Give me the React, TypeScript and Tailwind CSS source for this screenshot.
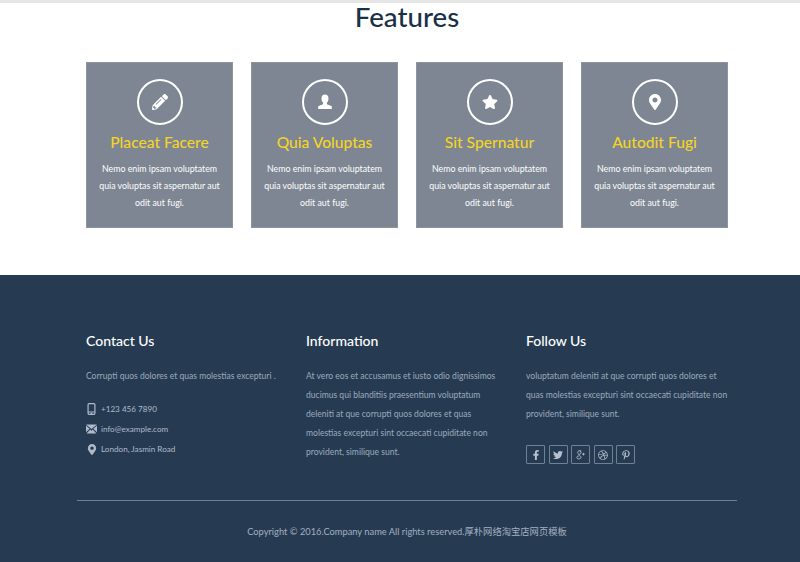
import { FaDribbble, FaFacebookF, FaMapMarkerAlt, FaPencilAlt, FaPinterestP, FaStar, FaTwitter } from 'react-icons/fa'

function UserGlyph() {
  return (
    <svg className="w-[16px] h-[16px]" viewBox="0 0 16 16" fill="currentColor">
      <path d="M8 0.5c2.2 0 3.5 1.6 3.5 3.9 0 1.7-.7 3.3-1.6 4.2v1.3c0 .5 3.6 1.3 4.9 2.4v2.7H1.2v-2.7c1.3-1.1 4.9-1.9 4.9-2.4V8.6C5.200 7.700 4.500 6.100 4.500 4.400 4.500 2.100 5.800.5 8 .5z" />
    </svg>
  )
}

function PhoneGlyph() {
  return (
    <svg className="w-[9px] h-[12px]" viewBox="0 0 10 14" fill="none" stroke="currentColor">
      <rect x="1" y="0.7" width="8" height="12.6" rx="1.2" strokeWidth="1.4" />
      <path d="M1 10.500h8" strokeWidth="1.2" />
      <path d="M4 12h2" strokeWidth="1.4" />
    </svg>
  )
}

function MailGlyph() {
  return (
    <svg className="w-[11px] h-[10px]" viewBox="0 0 12 10" fill="currentColor">
      <path d="M0 0h12L6 5z" />
      <path d="M0 1.300v7.200L4 4.800zM12 1.300v7.200L8 4.800zM.6 10h10.800L7.400 5.600 6 6.800 4.600 5.600z" />
    </svg>
  )
}

// old style g+ mark
function GooglePlusGlyph({ className }: { className?: string }) {
  return (
    <svg className={className} viewBox="0 0 12 12" fill="none" stroke="currentColor" strokeWidth="1.100">
      <path d="M6.300 1H4C2.600 1 2 2 2 3s.8 2.200 2 2.200S6 4.200 6 3 5 1 4.300 1M3.500 5.500c-.6.4 2.500 1.600 2.500 3.200 0 1.100-1.100 2-2.600 2S1 10 1 8.900 2.200 7.200 3.800 7.200" />
      <path d="M9 3.500v3M7.500 5h3" />
    </svg>
  )
}

const cards = [
  { title: 'Placeat Facere', icon: <FaPencilAlt className="w-[16px] h-[16px]" /> },
  { title: 'Quia Voluptas', icon: <UserGlyph /> },
  { title: 'Sit Spernatur', icon: <FaStar className="w-[16px] h-[16px]" /> },
  { title: 'Autodit Fugi', icon: <FaMapMarkerAlt className="w-[14px] h-[16px]" /> },
]

const socials = [FaFacebookF, FaTwitter, GooglePlusGlyph, FaDribbble, FaPinterestP]

export default function App() {
  return (
    <div className="w-[800px] h-[562px] overflow-hidden bg-white font-['Lato','Noto_Sans_CJK_SC',sans-serif]">
      {/* Features */}
      <div className="h-[275px] border-t-[3px] border-[#e6e6e6]">
        <h2 className="pl-[14px] text-center text-[27.700px] font-medium leading-[27px] text-[#1a3047] h-[59px]">Features</h2>
        <div className="flex gap-[18px] pl-[86px]">
          {cards.map((card) => (
            <div key={card.title} className="shrink-0 w-[147px] h-[166px] bg-[#7d8692] border border-[#8e949d] flex flex-col items-center pt-[16px]">
              <div className="w-[46px] h-[46px] rounded-full border-2 border-white text-white flex items-center justify-center">
                {card.icon}
              </div>
              <h4 className="mt-[5px] text-[15.600px] font-medium leading-[24px] text-[#f5d327]">{card.title}</h4>
              <p className="mt-[6px] w-[130px] text-center text-[8.800px] leading-[17px] text-white">
                Nemo enim ipsam voluptatem quia voluptas sit aspernatur aut odit aut fugi.
              </p>
            </div>
          ))}
        </div>
      </div>

      {/* Footer */}
      <div className="h-[287px] bg-[#263b52]">
        <div className="flex pl-[86px] pt-[56px] h-[225px]">
          <div className="w-[220px]">
            <h3 className="text-[14px] font-medium leading-[20px] text-white">Contact Us</h3>
            <p className="mt-[16px] text-[8.550px] leading-[19px] text-[#9caabb]">Corrupti quos dolores et quas molestias excepturi .</p>
            <div className="mt-[15px] flex flex-col gap-[4px] text-[8.125px] text-[#aebacb]">
              <div className="flex items-center h-[16px]">
                <span className="w-[15px] flex justify-start pl-[1px]"><PhoneGlyph /></span>
                <span>+123 456 7890</span>
              </div>
              <div className="flex items-center h-[16px]">
                <span className="w-[15px] flex justify-start"><MailGlyph /></span>
                <span>info@example.com</span>
              </div>
              <div className="flex items-center h-[16px]">
                <span className="w-[15px] flex justify-start pl-[1px]"><FaMapMarkerAlt className="w-[10px] h-[11px]" /></span>
                <span>London, Jasmin Road</span>
              </div>
            </div>
          </div>
          <div className="w-[220px]">
            <h3 className="text-[14px] font-medium leading-[20px] text-white">Information</h3>
            <p className="mt-[16px] w-[195px] text-[8.550px] leading-[19px] text-[#9caabb]">
              At vero eos et accusamus et iusto odio dignissimos ducimus qui blanditiis praesentium voluptatum deleniti at que corrupti quos dolores et quas molestias excepturi sint occaecati cupiditate non provident, similique sunt.
            </p>
          </div>
          <div className="w-[210px]">
            <h3 className="text-[14px] font-medium leading-[20px] text-white">Follow Us</h3>
            <p className="mt-[16px] text-[8.550px] leading-[19px] text-[#9caabb]">
              voluptatum deleniti at que corrupti quos dolores et quas molestias excepturi sint occaecati cupiditate non provident, similique sunt.
            </p>
            <div className="mt-[21px] flex gap-[3.600px]">
              {socials.map((Icon, i) => (
                <div key={i} className="w-[19px] h-[19px] border border-[#6f8196] rounded-[1px] flex items-center justify-center text-[#b4c0cd]">
                  <Icon className="w-[10px] h-[10px]" />
                </div>
              ))}
            </div>
          </div>
        </div>
        <div className="mx-[77px] w-[660px] border-t border-[#6d7f94]" />
        <p className="mt-[24px] pl-[14px] text-center text-[9.300px] leading-[14px] text-[#a3b0c0]">
          Copyright © 2016.Company name All rights reserved.厚朴网络淘宝店网页模板
        </p>
      </div>
    </div>
  )
}
